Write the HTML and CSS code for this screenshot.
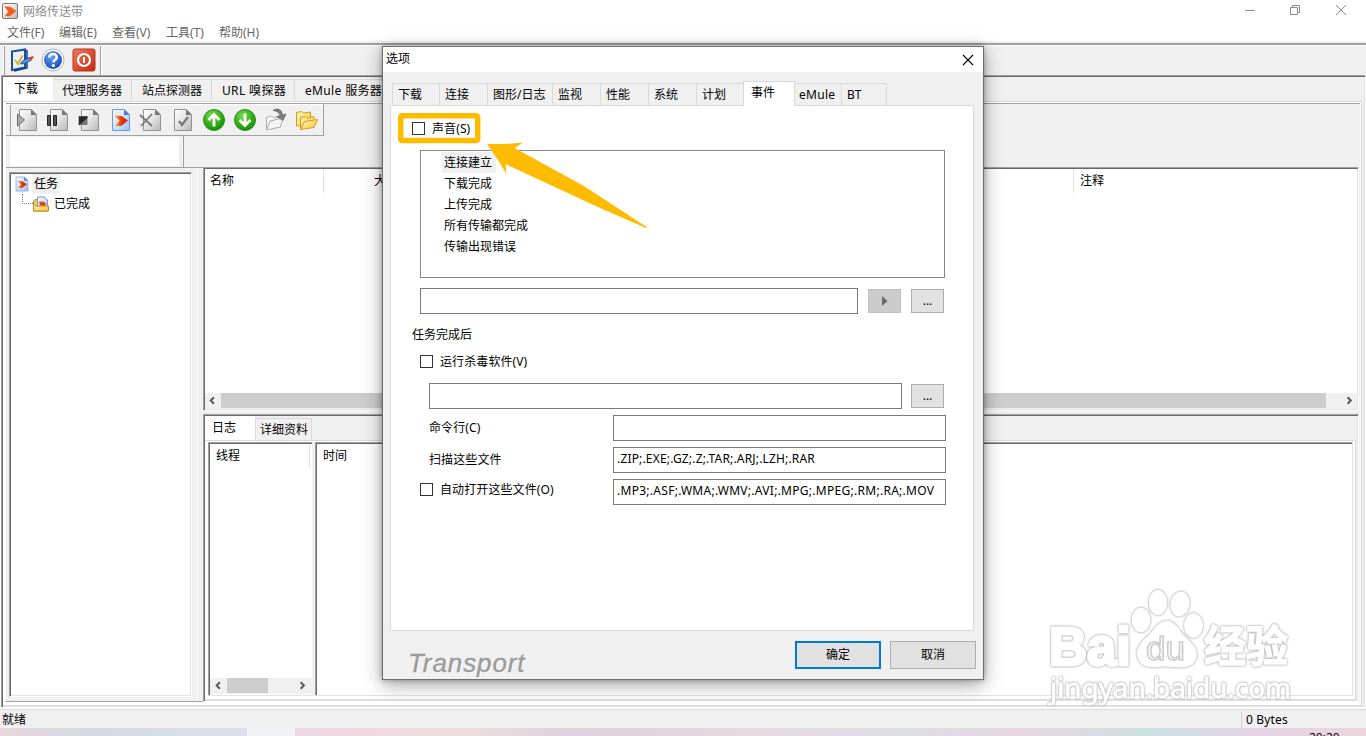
FILE: index.html
```html
<!DOCTYPE html>
<html lang="zh-CN">
<head>
<meta charset="utf-8">
<title>网络传送带</title>
<link rel="stylesheet" href="styles.css">
</head>
<body>
<svg class="defs" width="0" height="0">
  <defs>
    <linearGradient id="paper" x1="0" y1="0" x2="1" y2="1"><stop offset="0" stop-color="#fff"/><stop offset=".45" stop-color="#e6e6e6"/><stop offset="1" stop-color="#b8b8b8"/></linearGradient>
    <linearGradient id="bluepaper" x1="0" y1="0" x2="1" y2="1"><stop offset="0" stop-color="#fff"/><stop offset="1" stop-color="#9fc0f4"/></linearGradient>
    <linearGradient id="red" x1="0" y1="0" x2="1" y2="1"><stop offset="0" stop-color="#f07a5c"/><stop offset="1" stop-color="#c6280c"/></linearGradient>
    <linearGradient id="orange" x1="0" y1="0" x2="1" y2="0"><stop offset="0" stop-color="#ffa83c"/><stop offset=".6" stop-color="#dc2a06"/></linearGradient>
    <radialGradient id="green" cx=".4" cy=".3" r=".75"><stop offset="0" stop-color="#7fdc4e"/><stop offset=".6" stop-color="#2fae14"/><stop offset="1" stop-color="#14860a"/></radialGradient>
    <radialGradient id="blue" cx=".4" cy=".3" r=".75"><stop offset="0" stop-color="#6aa2ee"/><stop offset="1" stop-color="#1444b4"/></radialGradient>
    <linearGradient id="gold" x1="0" y1="0" x2="1" y2="1"><stop offset="0" stop-color="#fff6b4"/><stop offset="1" stop-color="#f6c53c"/></linearGradient>
    <symbol id="doc" viewBox="0 0 24 24"><path d="M4.500 1.500h12l5 5v16h-17z" fill="url(#paper)" stroke="#929292"/><path d="M16 1.500v5.500h5.500z" fill="#777"/></symbol>
    <symbol id="bluedoc" viewBox="0 0 24 24"><path d="M4.500 1.500h12l5 5v16h-17z" fill="url(#bluepaper)" stroke="#6e98da"/><path d="M16 1.500v5.500h5.500z" fill="#4c7fcf"/><path d="M6.500 7.500l7 .5 6.500 4.500-7 5.500H7.500l4-5.500z" fill="url(#orange)"/></symbol>
  </defs>
</svg>

<div class="app">
  <header class="titlebar">
    <svg class="appicon" viewBox="0 0 16 16"><rect x=".5" y=".5" width="15" height="15" rx="1.500" fill="url(#paper)" stroke="#777"/><path d="M2.500 3.500l6 .5 5.500 4-6 5H3l3.500-4.500z" fill="#f4581c" stroke="#f08030" stroke-width=".6"/></svg>
    <span class="caption">网络传送带</span>
    <svg class="winbtns" viewBox="0 0 110 14" fill="none" stroke="#8c8c8c"><path d="M4 7.500h10"/><path d="M49.500 4.500h7v7h-7zM51.500 4V2.500h7v7H57"/><path d="M95 2l10 10M105 2L95 12"/></svg>
  </header>
  <nav class="menubar"><span class="m1">文件(F)</span><span class="m2">编辑(E)</span><span class="m3">查看(V)</span><span class="m4">工具(T)</span><span>帮助(H)</span></nav>
  <div class="toolbar">
    <div class="toolgroup">
      <svg class="ic" viewBox="0 0 24 24"><path d="M2 3.500L15 1.500v18L2 22z" fill="#e8f1fc" stroke="#1d4f9c" stroke-width="2"/><path d="M5 12l3 4 4.500-8.500" fill="none" stroke="#e5a81f" stroke-width="1.800"/><path d="M15 2l2 1v17L4 23" fill="none" stroke="#173f7d" stroke-width="1.500"/><path d="M10.500 16l2-3 7-3.500 2 2.500-7 3.500z" fill="#5c9ae8" stroke="#1f54a8"/><path d="M19 9.500l4-1.500.8 2-3.800 2z" fill="#d9402c"/></svg>
      <svg class="ic" viewBox="0 0 24 24"><circle cx="12" cy="12" r="11" fill="#fff" stroke="#a9b3c4"/><circle cx="12" cy="12" r="9" fill="url(#blue)"/><path d="M8.300 9.500c0-5 7.900-4.500 7.400 0-.3 2.500-3.400 2.500-3.400 5" fill="none" stroke="#fff" stroke-width="2.500"/><circle cx="12.300" cy="17.500" r="1.600" fill="#fff"/></svg>
      <svg class="ic" viewBox="0 0 24 24"><rect x="1" y="1" width="22" height="22" rx="2" fill="url(#red)" stroke="#b8341c"/><circle cx="12" cy="12" r="6" fill="none" stroke="#fff" stroke-width="2.200"/><path d="M12 9v6" stroke="#fff" stroke-width="2"/></svg>
    </div>
  </div>
  <main class="frame sunken">
    <div class="tabs">
      <span class="tab on t1">下载</span><span class="tab t2">代理服务器</span><span class="tab t3">站点探测器</span><span class="tab t4">URL 嗅探器</span><span class="tab t5">eMule 服务器</span>
    </div>
    <div class="page">
      <div class="content">
        <div class="toolrow">
          <svg class="di" viewBox="0 0 24 24"><use href="#doc"/><path d="M2.500 6v12l7-6z" fill="#aaa" stroke="#6b6b6b"/></svg>
          <svg class="di" viewBox="0 0 24 24"><use href="#doc"/><path d="M1.500 7.500h3v10h-3zM7.500 7.500h3v10h-3z" fill="#555" stroke="#222"/></svg>
          <svg class="di" viewBox="0 0 24 24"><use href="#doc"/><path d="M1.500 8h9v9h-9z" fill="#777"/><path d="M2 8.500h8.500V10l-8 7H2z" fill="#282828"/></svg>
          <svg class="di" viewBox="0 0 24 24"><use href="#bluedoc"/></svg>
          <svg class="di" viewBox="0 0 24 24"><use href="#doc"/><path d="M1 7l12 11M13 6L2 18" stroke="#777" stroke-width="1.800"/></svg>
          <svg class="di" viewBox="0 0 24 24"><use href="#doc"/><path d="M9 13l3 4 6-8" fill="none" stroke="#777" stroke-width="2.200"/></svg>
          <svg class="di" viewBox="0 0 24 24"><circle cx="13" cy="12" r="10.500" fill="url(#green)" stroke="#26931a"/><path d="M13 18.500V7M7.500 12L13 6.500l5.500 5.500" fill="none" stroke="#fff" stroke-width="2.800"/></svg>
          <svg class="di" viewBox="0 0 24 24"><circle cx="13" cy="12" r="10.500" fill="url(#green)" stroke="#26931a"/><path d="M13 5.500V17M7.500 12l5.500 5.500 5.500-5.500" fill="none" stroke="#fff" stroke-width="2.800"/></svg>
          <svg class="di" viewBox="-1 0 24 24"><path d="M2.500 22V9.500l5-1.500 2 2 7-2v4" fill="#fafafa" stroke="#aaa"/><path d="M2.500 22l3.500-9 13-3-2.500 9z" fill="#f4f4f4" stroke="#aaa"/><path d="M9 2.500c5-3 9-1 9.500 4.500l3.500-1-3 6.500-6.500-4 3.500-.5c0-3-3-5-7-5.500z" fill="#808080" stroke="#555" stroke-width=".6"/></svg>
          <svg class="di" viewBox="-1 0 24 24"><path d="M1.500 18V4.500l5-1 2 1.500 7-1v5L12 17z" fill="url(#gold)" stroke="#d39b1c"/><path d="M5.500 21V9.500l5-1 1.500 2 7-2v3" fill="url(#gold)" stroke="#d39b1c"/><path d="M5.500 21.500l4-8 13-2-3.500 8z" fill="url(#gold)" stroke="#d39b1c"/></svg>
        </div>
        <div class="filterrow"><div class="filterbox"></div></div>
        <div class="panes">
          <aside class="left">
            <div class="tree sunken">
              <div class="node"><svg class="ni" viewBox="3 0 20 24" preserveAspectRatio="none"><use href="#bluedoc" width="24" height="24"/></svg><span class="focus">任务</span></div>
              <div class="node child"><i class="branch"></i><svg class="ni2" viewBox="0 0 16 16"><path d="M.5 15V5l2-1.500h4L8 5h6.500v10z" fill="#f3cf5a" stroke="#b88a1c"/><path d="M4.500 1h7l3 3v8h-10z" fill="url(#bluepaper)" stroke="#6e98da"/><path d="M6 5l5 1 2 2-4 3.500H6L8 8z" fill="url(#orange)"/><path d="M.5 15V8l2 2h13v5z" fill="url(#gold)" stroke="#b88a1c"/><path d="M6 6l5 .5 2 2.500H7z" fill="#e8401c"/></svg><span class="tx">已完成</span></div>
            </div>
          </aside>
          <section class="right">
            <div class="list sunken">
              <div class="heads"><span class="h1">名称</span><span class="h2">大小</span><span class="h3">注释</span></div>
              <div class="hscroll"><svg class="arr" viewBox="0 0 16 16"><path d="M9 4.500L5.500 8 9 11.500"/></svg><i class="thumb big"></i><svg class="arr" viewBox="0 0 16 16"><path d="M6.500 4.500L10 8l-3.500 3.500"/></svg></div>
            </div>
            <div class="lower sunken">
              <div class="ltabs"><span class="ltab on">日志</span><span class="ltab off">详细资料</span></div>
              <div class="lpage">
                <div class="threads"><div class="thead">线程</div><div class="hscroll small"><svg class="arr" viewBox="0 0 16 16"><path d="M10 4.500L6.500 8l3.500 3.500"/></svg><i class="thumb little"></i><svg class="arr" viewBox="0 0 16 16"><path d="M5.500 4.500L9 8l-3.500 3.500"/></svg></div></div>
                <div class="split"></div>
                <div class="times">时间</div>
              </div>
            </div>
          </section>
        </div>
      </div>
    </div>
  </main>
  <footer class="status"><span class="ready">就绪</span><span class="bytes">0 Bytes</span></footer>
  <div class="taskbar"><i class="active"></i><span class="clock">20:20</span></div>
</div>

<div class="dialog">
  <div class="dtitle"><span>选项</span><svg class="dclose" viewBox="0 0 12 12"><path d="M1 1l10 10M11 1L1 11" stroke="#000" stroke-width="1.100"/></svg></div>
  <div class="dtabs"><span class="dt w47">下载</span><span class="dt w48">连接</span><span class="dt w65">图形/日志</span><span class="dt w48">监视</span><span class="dt w48">性能</span><span class="dt w48">系统</span><span class="dt w47">计划</span><span class="dt cur">事件</span><span class="dt w46 tight">eMule</span><span class="dt w46 last">BT</span></div>
  <div class="pane">
    <label class="row sound"><i class="cb"></i><span>声音(S)</span></label>
    <div class="listbox"><div><span class="sel">连接建立</span></div><div>下载完成</div><div>上传完成</div><div>所有传输都完成</div><div>传输出现错误</div></div>
    <div class="row file"><div class="field f438"></div><div class="btn dis"><svg viewBox="0 0 6 10"><path d="M0 0l5.500 5L0 10z" fill="#6a6a6a"/></svg></div><div class="btn">...</div></div>
    <div class="group">任务完成后</div>
    <label class="row virus"><i class="cb"></i><span>运行杀毒软件(V)</span></label>
    <div class="row scan"><div class="field f473"></div><div class="btn">...</div></div>
    <div class="row opt"><span class="lab">命令行(C)</span><div class="field f333"></div></div>
    <div class="row opt"><span class="lab">扫描这些文件</span><div class="field f333"><span class="ext1">.ZIP;.EXE;.GZ;.Z;.TAR;.ARJ;.LZH;.RAR</span></div></div>
    <div class="row opt auto"><label class="row lab"><i class="cb"></i><span>自动打开这些文件(O)</span></label><div class="field f333"><span class="ext2">.MP3;.ASF;.WMA;.WMV;.AVI;.MPG;.MPEG;.RM;.RA;.MOV</span></div></div>
  </div>
  <div class="dfoot"><span class="brand">Transport</span><div class="ok">确定</div><div class="cancel">取消</div></div>
</div>

<svg class="overlay" viewBox="0 0 1366 736">
  <rect x="400.700" y="115.700" width="77" height="24.800" rx="1.500" fill="none" stroke="#ffbb00" stroke-width="5.500"/>
  <path d="M487 144Q506 144.500 523 142.500L514.500 148 583 185.500 647.500 227.500 646 228 600 208 505.500 164 506.500 174Q498 159 487 144z" fill="#ffbb00"/>
  <g class="mark">
    <text class="bai" x="1049" y="665" textLength="82" lengthAdjust="spacingAndGlyphs">Bai</text>
    <ellipse cx="1141" cy="620" rx="9" ry="12"/><ellipse cx="1158" cy="602.500" rx="8.800" ry="12.300"/><ellipse cx="1180" cy="604" rx="9.200" ry="12" transform="rotate(10 1180 604)"/><ellipse cx="1193.500" cy="625.500" rx="9" ry="12"/>
    <path d="M1167 621c-9 0-13 10-20 16-8 7-12 14-8 23 4 8 13 7 28 6 15 2 26 2 29-8 2-9-4-15-12-22-5-5-8-15-17-15z"/>
    <text class="du" x="1146" y="660" textLength="39" lengthAdjust="spacingAndGlyphs">du</text>
    <text class="jy" x="1204" y="662" textLength="84" lengthAdjust="spacingAndGlyphs">经验</text>
    <text class="url" x="1050" y="698" textLength="241" lengthAdjust="spacingAndGlyphs">jingyan.baidu.com</text>
  </g>
</svg>
</body>
</html>
```
FILE: styles.css
```css
* { box-sizing: border-box; }
body { margin: 0; width: 1366px; height: 736px; overflow: hidden; position: relative; background: #fff; color: #000; font: 12px/16px "Noto Sans", "Noto Sans CJK SC", sans-serif; white-space: nowrap; }
svg { display: block; flex: none; }
i { display: block; flex: none; }
.defs { position: absolute; }
.app { display: flex; flex-direction: column; width: 1366px; height: 736px; }
.sunken { border: 1px solid; border-color: #a0a0a0 #fff #fff #a0a0a0; box-shadow: inset 1px 1px #696969, inset -1px -1px #e3e3e3; padding: 1px; }

.titlebar { display: flex; height: 22px; padding: 3px 15px 0 2px; color: #8c8c8c; }
.appicon { width: 16px; height: 16px; }
.caption { margin-left: 5px; padding-top: 1px; flex: 1; }
.winbtns { width: 110px; height: 14px; }
.menubar { display: flex; height: 19px; padding: 3px 0 0 7px; color: #666; }
.m1 { width: 52px; } .m2 { width: 53px; } .m3 { width: 54px; } .m4 { width: 53px; }
.toolbar { height: 34px; background: #f0f0f0; padding-top: 2px; }
.toolbar::before { content: ""; display: block; height: 2px; background: #a0a0a0; border-bottom: 1px solid #fff; }
.toolgroup { display: flex; gap: 7px; height: 30px; width: 97px; margin-left: 4px; padding: 2px 0 0 5px; border: solid #a0a0a0; border-width: 0 1px; box-shadow: 1px 0 #fff, -1px 0 #fff; }
.ic { width: 24px; height: 24px; }

.frame { width: 1365px; height: 633px; margin-left: 1px; background: #f0f0f0; }
.tabs { display: flex; align-items: flex-end; height: 24px; }
.tab { height: 22px; padding: 3px 0 0 9px; border: solid #d9d9d9; border-width: 1px 1px 0 0; }
.tab.on { height: 24px; background: #fff; border: 0; padding: 4px 0 0 11px; }
.t1 { width: 50px; } .t2 { width: 79px; } .t3 { width: 80px; } .t4 { width: 83px; } .t5 { width: 105px; }
.tab.t3, .tab.t4, .tab.t5 { padding-left: 10px; }
.t4, .t5 { letter-spacing: .35px; }
.page { width: 1359px; height: 605px; background: #fff; border: solid #d9d9d9; border-width: 1px 1px 1px 0; padding: 1px 1px 3px 3px; }
.content { height: 599px; background: #f0f0f0; border-top: 1px solid #a0a0a0; display: flex; flex-direction: column; }
.toolrow { display: flex; height: 32px; width: 318px; padding: 4px 0 0 9px; gap: 7px; border: solid #a0a0a0; border-width: 0 1px 1px 0; box-shadow: inset 0 1px #fff, inset 4px 0 #f0f0f0, inset 5px 0 #a0a0a0; }
.di { width: 24px; height: 24px; }
.filterrow { height: 31px; width: 178px; padding: 1px 5px 1px 4px; border-right: 1px solid #a0a0a0; }
.filterbox { height: 29px; width: 169px; background: #fff; }
.panes { display: flex; flex: 1; }
.left { width: 197px; height: 535px; border: solid #a0a0a0; border-width: 1px 0; padding: 4px 0 0 3px; box-shadow: inset -5px 0 #f0f0f0, inset -6px 0 #fff; }
.tree { width: 183px; height: 525px; background: #fff; }
.node { display: flex; align-items: center; height: 20px; padding-left: 3px; }
.ni { width: 14px; height: 16px; margin-left: 1px; }
.focus { background: #f0f0f0; padding: 1px 2px; margin-left: 3px; line-height: 18px; }
.child { padding-left: 11px; }
.branch { width: 11px; height: 10px; margin-top: -10px; border: dotted #808080; border-width: 0 0 1px 1px; }
.ni2 { width: 16px; height: 16px; }
.tx { margin-left: 5px; }
.right { width: 1156px; }
.list { height: 244px; background: #fff; display: flex; flex-direction: column; justify-content: space-between; }
.heads { display: flex; height: 24px; line-height: 24px; }
.h1 { width: 119px; padding-left: 5px; border-right: 1px solid #e2e2e2; }
.h2 { width: 750px; padding-left: 50px; border-right: 1px solid #e2e2e2; }
.h3 { padding-left: 6px; }
.hscroll { display: flex; height: 16px; background: #f0f0f0; justify-content: space-between; }
.arr { width: 16px; height: 15px; fill: none; stroke: #555; stroke-width: 2; }
.thumb { height: 15px; background: #cdcdcd; }
.big { width: 1105px; margin-right: auto; }
.lower { height: 288px; margin-top: 3px; background: #f0f0f0; }
.ltabs { display: flex; align-items: flex-end; height: 24px; }
.ltab.on { width: 50px; height: 24px; padding: 4px 0 0 7px; background: #fff; }
.ltab.off { width: 57px; height: 22px; padding: 3px 0 0 4px; border: 1px solid #d9d9d9; border-bottom: 0; }
.lpage { display: flex; width: 1151px; height: 260px; border: solid #d9d9d9; border-width: 1px 1px 1px 0; padding: 1px 2px 3px 3px; background: #fff; }
.threads { width: 104px; border: solid #a0a0a0; border-width: 1px 0 0 1px; box-shadow: inset 1px 1px #696969; padding: 1px 0 1px 1px; display: flex; flex-direction: column; justify-content: space-between; border-bottom: 1px solid #e3e3e3; }
.thead { width: 100px; height: 24px; line-height: 24px; padding-left: 6px; border-right: 1px solid #e2e2e2; }
.small { justify-content: flex-start; }
.little { width: 41px; margin: 0 27px 0 1px; }
.split { width: 3px; background: #f0f0f0; }
.times { flex: 1; border: 1px solid; border-color: #a0a0a0 #e3e3e3 #e3e3e3 #a0a0a0; box-shadow: inset 1px 1px #696969; padding-left: 7px; line-height: 26px; }
.status { display: flex; height: 20px; background: #f0f0f0; border-top: 1px solid #fff; box-shadow: inset 0 1px #d9d9d9; padding-top: 3px; }
.ready { width: 1241px; padding-left: 2px; }
.bytes { padding-left: 4px; border-left: 1px solid #d0d0d0; letter-spacing: .15px; }
.taskbar { display: flex; height: 8px; overflow: hidden; background: linear-gradient(90deg, #ead5dc, #d1dbe5 7%, #dedfeb 18%, #efd8e2 24%, #edddde 34%, #ded1dd 42%, #e8d8df 55%, #dcdde8 66%, #e8d5df 75%, #cce1e5 84%, #e5d3e5 92%, #ead5dc); }
.active { width: 48px; margin-left: 247px; background: #f0f2f8; }
.clock { margin-left: 1014px; padding-top: 2px; }

.dialog { position: absolute; left: 382px; top: 46px; width: 602px; height: 634px; background: #f0f0f0; border: 1px solid #6d6d6d; box-shadow: 0 5px 18px rgba(0,0,0,.36), 0 0 5px rgba(0,0,0,.3); }
.dtitle { display: flex; justify-content: space-between; align-items: center; height: 25px; background: #fff; padding: 0 9px 0 3px; }
.dtitle span { padding-bottom: 1px; }
.dclose { width: 12px; height: 12px; }
.dtabs { display: flex; align-items: flex-end; height: 33px; padding-left: 9px; }
.dt { height: 22px; padding: 3px 0 0 5px; border: solid #d9d9d9; border-width: 1px 0 0 1px; }
.w46 { width: 46px; } .w47 { width: 47px; } .w48 { width: 48px; } .w65 { width: 65px; }
.dt.tight { padding-left: 4px; border-left: 0; letter-spacing: .3px; }
.dt.last { border-right: 1px solid #d9d9d9; }
.dt.cur { height: 25px; width: 52px; margin-bottom: -1px; padding: 3px 0 0 7px; background: #fff; border-width: 1px 1px 0 1px; position: relative; }
.pane { width: 584px; height: 526px; margin-left: 7px; background: #fff; border: 1px solid #d9d9d9; padding-top: 8px; }
.row { display: flex; align-items: center; }
.cb { width: 13px; height: 13px; border: 1px solid #333; background: #fff; margin-right: 7px; }
.row span { letter-spacing: .1px; }
.sound { height: 29px; padding-left: 21px; }
.listbox { width: 525px; height: 128px; margin: 7px 0 0 29px; border: 1px solid #828790; padding: 1px 0 0 23px; line-height: 21px; }
.sel { display: inline-block; background: #f0f0f0; margin-left: -2px; padding: 0 4px 0 2px; }
.file { margin: 10px 0 0 29px; height: 26px; gap: 10px; }
.field { height: 26px; border: 1px solid #7a7a7a; background: #fff; padding: 3px 3px; }
.field .ext1 { letter-spacing: .17px; }
.field .ext2 { letter-spacing: .28px; }
.f438 { width: 438px; } .f473 { width: 473px; } .f333 { width: 333px; }
.btn { width: 33px; height: 24px; background: #e1e1e1; border: 1px solid #adadad; display: flex; align-items: center; justify-content: center; }
.btn.dis { background: #ccc; border-color: #bfbfbf; }
.btn svg { width: 6px; height: 10px; }
.group { margin: 13px 0 0 21px; }
.virus { height: 16px; margin: 10px 0 0 29px; }
.virus span { padding-top: 2px; }
.scan { height: 26px; margin: 14px 0 6px 38px; gap: 9px; }
.opt { height: 26px; margin: 0 0 6px 38px; }
.lab { width: 184px; }
.auto { margin-left: 29px; }
.auto .lab { width: 193px; padding-bottom: 5px; }
.dfoot { display: flex; height: 48px; padding: 10px 7px 0 25px; }
.brand { width: 387px; padding-top: 10px; font: italic 26px/24px "Liberation Sans", sans-serif; letter-spacing: .9px; color: #9b9b9b; -webkit-text-stroke: .4px #9b9b9b; text-shadow: 1px 1px #fff; }
.ok, .cancel { width: 86px; height: 28px; background: #e1e1e1; border: 1px solid #adadad; text-align: center; line-height: 26px; }
.ok { border: 2px solid #0078d7; margin-right: 9px; line-height: 24px; }
.overlay { position: absolute; left: 0; top: 0; width: 1366px; height: 736px; }
.mark { fill: #fff; stroke: #fff; stroke-width: 1; filter: drop-shadow(0 0 1px #a8a8a8) drop-shadow(0 0 .5px #ccc); }
.bai { font: bold 54px "Liberation Sans", sans-serif; stroke-width: 3; }
.du { font: 34px "Liberation Sans", sans-serif; stroke: #ccc; stroke-width: 1.600; }
.jy { font: bold 43px "Noto Sans CJK SC", sans-serif; stroke-width: 1.500; }
.url { font: 28px "Noto Sans", sans-serif; stroke-width: .8; }
```
